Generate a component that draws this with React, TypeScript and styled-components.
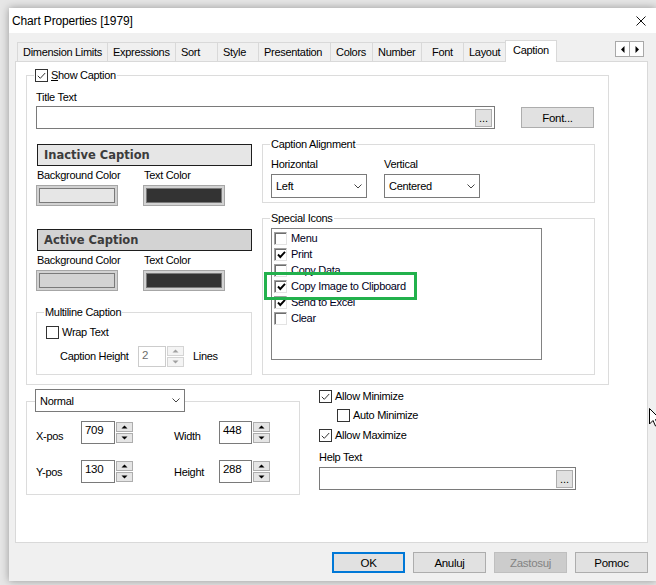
import styled, { createGlobalStyle } from 'styled-components';

const GlobalStyle = createGlobalStyle`
  html, body { margin: 0; padding: 0; }
  body {
    background: #e6e6e6;
    font-family: "Liberation Sans", Arial, sans-serif;
    font-size: 11px;
    letter-spacing: -0.3px;
    color: #000;
  }
  *, *::before, *::after { box-sizing: border-box; }
`;

/* fondo de escritorio y ventana */
const Screen = styled.div`
  position: relative;
  width: 656px;
  height: 585px;
  padding: 8px 0 0 9px;
  overflow: hidden;
`;

const Dialog = styled.div`
  width: 647px;
  height: 573px;
  background: #f0f0f0;
  box-shadow: 0 0 8px rgba(0, 0, 0, 0.35);
  display: flex;
  flex-direction: column;
`;

const TitleBar = styled.div`
  flex: none;
  height: 25px;
  background: #fff;
  display: flex;
  align-items: center;
  justify-content: space-between;
  padding: 0 10px 0 3px;
  font-size: 12px;
  letter-spacing: -0.15px;
`;

const Body = styled.div`
  padding: 7px 0 0 6px;
`;

// Pestanas
const TabStrip = styled.div`
  display: flex;
  align-items: flex-end;
  width: 633px;
  height: 21px;
  padding-left: 2px;
`;

const Tab = styled.div<{ $w: number; $pl?: number; $active?: boolean }>`
  position: relative;
  flex: none;
  width: ${p => p.$w}px;
  height: ${p => (p.$active ? 22 : 19)}px;
  margin-right: -1px;
  margin-bottom: ${p => (p.$active ? -1 : 0)}px;
  padding-left: ${p => p.$pl ?? 5}px;
  border: 1px solid #d9d9d9;
  border-bottom: none;
  background: ${p => (p.$active ? '#fff' : '#f0f0f0')};
  line-height: ${p => (p.$active ? 18 : 18)}px;
  white-space: nowrap;
  z-index: ${p => (p.$active ? 2 : 1)};
`;

const TabScroller = styled.div`
  display: flex;
  align-self: flex-start;
  margin: 1px 4px 0 auto;
`;

const ScrollBtn = styled.div`
  width: 15px;
  height: 16px;
  border: 1px solid #a8a8a8;
  background: #fdfdfd;
  display: flex;
  align-items: center;
  justify-content: center;
  & + & { margin-left: -1px; }
`;

const Panel = styled.div`
  position: relative;
  width: 633px;
  height: 482px;
  background: #fff;
  border: 1px solid #d9d9d9;
  padding: 13px 0 0 10px;
`;

// Marcos de grupo
const GroupBox = styled.div<{ $w: number; $h: number }>`
  position: relative;
  flex: none;
  width: ${p => p.$w}px;
  height: ${p => p.$h}px;
  border: 1px solid #dcdcdc;
`;

const Legend = styled.div`
  position: absolute;
  top: -7px;
  left: 7px;
  display: flex;
  align-items: center;
  gap: 3px;
  padding: 0 1px;
  line-height: 13px;
  background: #fff;
  white-space: nowrap;
`;

const CaptionGroup = styled(GroupBox)`
  padding: 15px 0 0 9px;
`;

const AlignGroup = styled(GroupBox)`
  padding: 13px 0 0 8px;
`;

const IconsGroup = styled(GroupBox)`
  margin-top: 15px;
  padding: 9px 0 0 8px;
`;

const MultiGroup = styled(GroupBox)`
  margin-top: 21px;
  padding: 13px 0 0 9px;
`;

const PosGroup = styled(GroupBox)`
  margin-top: 16px;
  padding: 19px 0 0 9px;
`;

const Label = styled.div`
  line-height: 13px;
  white-space: nowrap;
`;

const PosLabel = styled(Label)<{ $dy?: number }>`
  padding-top: ${p => p.$dy ?? 0}px;
`;

const TitleRow = styled.div`
  display: flex;
  align-items: center;
  gap: 26px;
  margin-top: 2px;
`;

const TextBox = styled.div<{ $w: number }>`
  width: ${p => p.$w}px;
  height: 23px;
  border: 1px solid #7a7a7a;
  background: #fff;
  display: flex;
  align-items: center;
  justify-content: flex-end;
  padding-right: 2px;
`;

const Browse = styled.div`
  width: 17px;
  height: 18px;
  border: 1px solid #adadad;
  background: #e1e1e1;
  display: flex;
  align-items: flex-end;
  justify-content: center;
  padding-bottom: 3px;
  line-height: 10px;
  letter-spacing: 0;
`;

const PushButton = styled.div<{ $w: number; $h: number; $kind?: 'default' | 'disabled' }>`
  flex: none;
  width: ${p => p.$w}px;
  height: ${p => p.$h}px;
  display: flex;
  align-items: center;
  justify-content: center;
  background: ${p => (p.$kind === 'disabled' ? '#cccccc' : '#e1e1e1')};
  border: 1px solid ${p =>
    p.$kind === 'default' ? '#0078d7' :
      p.$kind === 'disabled' ? '#bfbfbf' :
        '#adadad'};
  box-shadow: ${p => (p.$kind === 'default' ? 'inset 0 0 0 1px #0078d7' : 'none')};
  color: ${p => (p.$kind === 'disabled' ? '#838383' : '#000')};
  font-size: 11.5px;
`;

const Columns = styled.div`
  display: flex;
  gap: 11px;
  margin-top: 15px;
`;

const LeftCol = styled.div`
  display: flex;
  flex-direction: column;
  width: 215px;
`;

const RightCol = styled.div`
  display: flex;
  flex-direction: column;
  width: 333px;
`;

const CaptionHeader = styled.div<{ $bg: string; $mt?: number }>`
  margin: ${p => p.$mt ?? 0}px 0 0 1px;
  width: 215px;
  height: 22px;
  border: 1px solid #1e1e1e;
  background: ${p => p.$bg};
  padding-left: 6px;
  line-height: 20px;
  font-family: "DejaVu Sans", Verdana, sans-serif;
  font-weight: bold;
  font-size: 11.5px;
  letter-spacing: 0;
  color: #3c3c3c;
`;

const ColorGrid = styled.div`
  display: grid;
  grid-template-columns: 107px 82px;
  row-gap: 3px;
  margin-top: 3px;
  & > ${Label} { padding-left: 1px; }
`;

const Swatch = styled.div<{ $fill: string }>`
  width: 82px;
  height: 21px;
  border: 1px solid #a6a6a6;
  background: ${p => p.$fill};
  box-shadow: inset 0 0 0 2px #d2d2d2, inset 0 0 0 3px #7a7a7a;
`;

// Casillas de verificacion
const CheckBox = styled.span`
  flex: none;
  width: 13px;
  height: 13px;
  border: 1px solid #333;
  background: #fff;
  display: inline-flex;
  align-items: center;
  justify-content: center;
`;

const OldCheckBox = styled.span`
  flex: none;
  width: 13px;
  height: 13px;
  border: 1px solid;
  border-color: #a0a0a0 #e3e3e3 #e3e3e3 #a0a0a0;
  box-shadow: inset 1px 1px 0 #6e6e6e;
  background: #fff;
  display: inline-flex;
  align-items: center;
  justify-content: center;
  padding: 1px 0 0 1px;
`;

const CheckRow = styled.div<{ $indent?: number; $mt?: number }>`
  display: flex;
  align-items: center;
  gap: 3px;
  height: 13px;
  line-height: 13px;
  margin-left: ${p => p.$indent ?? 0}px;
  margin-top: ${p => p.$mt ?? 0}px;
  white-space: nowrap;
`;

const HeightRow = styled.div`
  display: flex;
  align-items: center;
  margin: 7px 0 0 14px;
`;

const HeightLabel = styled(Label)`
  width: 78px;
`;

const LinesLabel = styled(Label)`
  margin-left: 9px;
`;

// Alineacion
const AlignRow = styled.div`
  display: flex;
  gap: 17px;
`;

const Field = styled.div`
  display: flex;
  flex-direction: column;
  gap: 3px;
`;

const SelectBox = styled.div<{ $w: number; $h: number }>`
  width: ${p => p.$w}px;
  height: ${p => p.$h}px;
  border: 1px solid #7a7a7a;
  background: #fff;
  display: flex;
  align-items: center;
  justify-content: space-between;
  padding: 0 4px 0 4px;
`;

const GroupSelect = styled(SelectBox)`
  position: absolute;
  top: -13px;
  left: 8px;
`;

// Lista de iconos
const ListBox = styled.div`
  width: 271px;
  height: 132px;
  border: 1px solid #828282;
  padding: 1px 0 0 2px;
`;

const ListItem = styled.div`
  display: flex;
  align-items: center;
  gap: 4px;
  height: 16px;
  color: #000022;
  white-space: nowrap;
`;

const Highlight = styled.div`
  position: absolute;
  left: 1px;
  top: 53px;
  width: 153px;
  height: 28px;
  border: 3px solid #22b14c;
`;

// Spinners
const SpinWrap = styled.div<{ $h: number }>`
  display: flex;
  gap: 1px;
  height: ${p => p.$h}px;
`;

const SpinField = styled.div<{ $w: number; $disabled?: boolean }>`
  width: ${p => p.$w}px;
  height: 100%;
  border: 1px solid ${p => (p.$disabled ? '#cccccc' : '#7a7a7a')};
  color: ${p => (p.$disabled ? '#6d6d6d' : '#000')};
  padding: 2px 0 0 3px;
  line-height: 13px;
  font-size: 11.5px;
`;

const SpinButtons = styled.div<{ $disabled?: boolean }>`
  display: flex;
  flex-direction: column;
  gap: 1px;
  width: 17px;
  padding: ${p => (p.$disabled ? 0 : 1)}px 0;
`;

const SpinBtn = styled.div<{ $disabled?: boolean }>`
  flex: 1;
  border: 1px solid ${p => (p.$disabled ? '#d4d4d4' : '#adadad')};
  background: ${p => (p.$disabled ? '#f4f4f4' : '#e5e5e5')};
  display: flex;
  align-items: center;
  justify-content: center;
`;

// Parte inferior
const BottomRow = styled.div`
  display: flex;
  align-items: flex-start;
`;

const PosGrid = styled.div`
  display: grid;
  grid-template-columns: 45px 93px 45px 51px;
  row-gap: 16px;
  align-items: center;
`;

const MinCol = styled.div`
  display: flex;
  flex-direction: column;
  align-items: flex-start;
  margin: 5px 0 0 19px;
`;

const HelpLabel = styled(Label)`
  margin-top: 9px;
`;

const HelpBox = styled(TextBox)`
  margin-top: 3px;
`;

const ButtonRow = styled.div`
  display: flex;
  justify-content: flex-end;
  gap: 8px;
  width: 633px;
  margin-top: 9px;
`;

const Cursor = styled.svg`
  position: absolute;
  left: 649px;
  top: 408px;
`;

const Tick = ({ bold }: { bold?: boolean }) => (
  <svg width="9" height="8" viewBox="0 0 9 8">
    <path
      d={bold ? 'M1 3.5 L3.3 6 L8 0.8' : 'M0.8 3.8 L3.3 6.3 L8.2 1'}
      fill="none"
      stroke={bold ? '#000' : '#333'}
      strokeWidth={bold ? 1.9 : 1}
    />
  </svg>
);

const Chevron = () => (
  <svg width="8" height="5" viewBox="0 0 8 5">
    <path d="M0.5 0.5 L4 4 L7.5 0.5" fill="none" stroke="#444" strokeWidth="1" />
  </svg>
);

const Tri = ({ up, color = '#000' }: { up?: boolean; color?: string }) => (
  <svg width="7" height="4" viewBox="0 0 7 4">
    <path d={up ? 'M0.5 3.5 L3.5 0.5 L6.5 3.5 Z' : 'M0.5 0.5 L3.5 3.5 L6.5 0.5 Z'} fill={color} />
  </svg>
);

const Spinner = ({ value, w, h = 23, disabled }: { value: string; w: number; h?: number; disabled?: boolean }) => (
  <SpinWrap $h={h}>
    <SpinField $w={w} $disabled={disabled}>{value}</SpinField>
    <SpinButtons $disabled={disabled}>
      <SpinBtn $disabled={disabled}><Tri up color={disabled ? '#a0a0a0' : '#000'} /></SpinBtn>
      <SpinBtn $disabled={disabled}><Tri color={disabled ? '#a0a0a0' : '#000'} /></SpinBtn>
    </SpinButtons>
  </SpinWrap>
);

const tabs = [
  { label: 'Dimension Limits', w: 91 },
  { label: 'Expressions', w: 69 },
  { label: 'Sort', w: 43 },
  { label: 'Style', w: 42 },
  { label: 'Presentation', w: 73 },
  { label: 'Colors', w: 43 },
  { label: 'Number', w: 50 },
  { label: 'Font', w: 43, pl: 10 },
  { label: 'Layout', w: 43 },
];

const icons = [
  { label: 'Menu', checked: false },
  { label: 'Print', checked: true },
  { label: 'Copy Data', checked: false },
  { label: 'Copy Image to Clipboard', checked: true },
  { label: 'Send to Excel', checked: true },
  { label: 'Clear', checked: false },
];

const CaptionColors = ({ title, bg, light, mt }: { title: string; bg: string; light: string; mt?: number }) => (
  <>
    <CaptionHeader $bg={bg} $mt={mt}>{title}</CaptionHeader>
    <ColorGrid>
      <Label>Background Color</Label>
      <Label>Text Color</Label>
      <Swatch $fill={light} />
      <Swatch $fill="#333333" />
    </ColorGrid>
  </>
);

export default function App() {
  return (
    <Screen>
      <GlobalStyle />
      <Dialog>
        <TitleBar>
          <span>Chart Properties [1979]</span>
          <svg width="10" height="10" viewBox="0 0 10 10">
            <path d="M0.5 0.5 L9.5 9.5 M9.5 0.5 L0.5 9.5" stroke="#111" strokeWidth="1" />
          </svg>
        </TitleBar>

        <Body>
          <TabStrip>
            {tabs.map(t => (
              <Tab key={t.label} $w={t.w} $pl={t.pl}>{t.label}</Tab>
            ))}
            <Tab $w={52} $pl={7} $active>Caption</Tab>
            <TabScroller>
              <ScrollBtn>
                <svg width="4" height="7" viewBox="0 0 4 7"><path d="M3.5 0 L0 3.5 L3.5 7 Z" fill="#000" /></svg>
              </ScrollBtn>
              <ScrollBtn>
                <svg width="4" height="7" viewBox="0 0 4 7"><path d="M0.5 0 L4 3.5 L0.5 7 Z" fill="#000" /></svg>
              </ScrollBtn>
            </TabScroller>
          </TabStrip>

          <Panel>
            <CaptionGroup $w={583} $h={310}>
              <Legend>
                <CheckBox><Tick /></CheckBox>
                <span><u>S</u>how Caption</span>
              </Legend>

              <Label>Title Text</Label>
              <TitleRow>
                <TextBox $w={459}><Browse>...</Browse></TextBox>
                <PushButton $w={73} $h={21}>Font...</PushButton>
              </TitleRow>

              <Columns>
                <LeftCol>
                  <CaptionColors title="Inactive Caption" bg="#e6e6e6" light="#e6e6e6" />
                  <CaptionColors title="Active Caption" bg="#d3d3d3" light="#d3d3d3" mt={23} />

                  <MultiGroup $w={216} $h={63}>
                    <Legend>Multiline Caption</Legend>
                    <CheckRow>
                      <CheckBox />
                      <span>Wrap Text</span>
                    </CheckRow>
                    <HeightRow>
                      <HeightLabel>Caption Height</HeightLabel>
                      <Spinner value="2" w={28} h={21} disabled />
                      <LinesLabel>Lines</LinesLabel>
                    </HeightRow>
                  </MultiGroup>
                </LeftCol>

                <RightCol>
                  <AlignGroup $w={333} $h={59}>
                    <Legend>Caption Alignment</Legend>
                    <AlignRow>
                      <Field>
                        <Label>Horizontal</Label>
                        <SelectBox $w={96} $h={24}>Left<Chevron /></SelectBox>
                      </Field>
                      <Field>
                        <Label>Vertical</Label>
                        <SelectBox $w={96} $h={24}>Centered<Chevron /></SelectBox>
                      </Field>
                    </AlignRow>
                  </AlignGroup>

                  <IconsGroup $w={333} $h={157}>
                    <Legend>Special Icons</Legend>
                    <ListBox>
                      {icons.map(i => (
                        <ListItem key={i.label}>
                          <OldCheckBox>{i.checked && <Tick bold />}</OldCheckBox>
                          <span>{i.label}</span>
                        </ListItem>
                      ))}
                    </ListBox>
                    <Highlight />
                  </IconsGroup>
                </RightCol>
              </Columns>
            </CaptionGroup>

            <BottomRow>
              <PosGroup $w={274} $h={94}>
                <GroupSelect $w={150} $h={23}>Normal<Chevron /></GroupSelect>
                <PosGrid>
                  <PosLabel $dy={7}>X-pos</PosLabel>
                  <Spinner value="709" w={34} />
                  <PosLabel $dy={7}>Width</PosLabel>
                  <Spinner value="448" w={34} />
                  <PosLabel $dy={1}>Y-pos</PosLabel>
                  <Spinner value="130" w={34} />
                  <PosLabel $dy={1}>Height</PosLabel>
                  <Spinner value="288" w={34} />
                </PosGrid>
              </PosGroup>

              <MinCol>
                <CheckRow>
                  <CheckBox><Tick /></CheckBox>
                  <span>Allow Minimize</span>
                </CheckRow>
                <CheckRow $indent={18} $mt={6}>
                  <CheckBox />
                  <span>Auto Minimize</span>
                </CheckRow>
                <CheckRow $mt={7}>
                  <CheckBox><Tick /></CheckBox>
                  <span>Allow Maximize</span>
                </CheckRow>
                <HelpLabel>Help Text</HelpLabel>
                <HelpBox $w={257}><Browse>...</Browse></HelpBox>
              </MinCol>
            </BottomRow>
          </Panel>

          <ButtonRow>
            <PushButton $w={73} $h={21} $kind="default">OK</PushButton>
            <PushButton $w={73} $h={21}>Anuluj</PushButton>
            <PushButton $w={73} $h={21} $kind="disabled">Zastosuj</PushButton>
            <PushButton $w={73} $h={21}>Pomoc</PushButton>
          </ButtonRow>
        </Body>
      </Dialog>

      <Cursor width="12" height="19" viewBox="0 0 12 19">
        <path d="M0.5 0.5 L0.5 16 L4 12.5 L6.5 18 L9 17 L6.5 11.5 L11.5 11.5 Z" fill="#fff" stroke="#000" strokeWidth="1" />
      </Cursor>
    </Screen>
  );
}
